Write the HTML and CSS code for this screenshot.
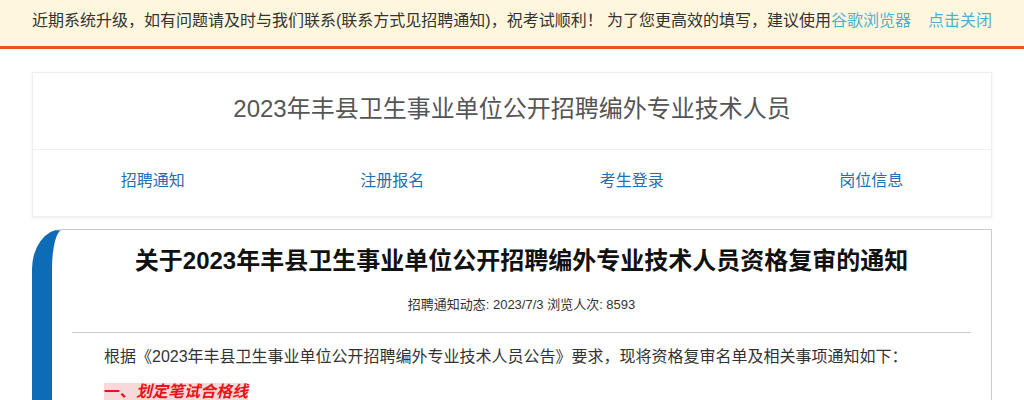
FILE: index.html
```html
<!DOCTYPE html>
<html lang="zh-CN">
<head>
<meta charset="utf-8">
<title>2023年丰县卫生事业单位公开招聘编外专业技术人员</title>
<link rel="stylesheet" href="styles.css">
</head>
<body>
<div class="notice-bar">
  <div class="wrap notice-inner">
    <span class="notice-text">近期系统升级，如有问题请及时与我们联系(联系方式见招聘通知)，祝考试顺利！ 为了您更高效的填写，建议使用<a class="notice-link" href="#">谷歌浏览器</a></span>
    <a class="notice-link" href="#">点击关闭</a>
  </div>
</div>

<div class="wrap header-card">
  <div class="site-title">2023年丰县卫生事业单位公开招聘编外专业技术人员</div>
  <nav class="nav">
    <a href="#">招聘通知</a>
    <a href="#">注册报名</a>
    <a href="#">考生登录</a>
    <a href="#">岗位信息</a>
  </nav>
</div>

<div class="wrap article">
  <h1 class="article-title">关于2023年丰县卫生事业单位公开招聘编外专业技术人员资格复审的通知</h1>
  <div class="article-meta">招聘通知动态: 2023/7/3 浏览人次: 8593</div>
  <div class="article-body">
    <p>根据《2023年丰县卫生事业单位公开招聘编外专业技术人员公告》要求，现将资格复审名单及相关事项通知如下：</p>
    <p><span class="hl">一、<em>划定笔试合格线</em></span></p>
  </div>
</div>
</body>
</html>
```

FILE: styles.css
```css
* { box-sizing: border-box; }
body {
  margin: 0;
  background: #fff;
  font-family: "Liberation Sans", Arial, "Noto Sans CJK SC", sans-serif;
  color: #333;
}
a { text-decoration: none; }
.wrap { width: 960px; margin: 0 auto; }

.notice-bar {
  background: #fff7dd;
  border-bottom: 3px solid #e55a1c;
  height: 49px;
}
.notice-inner {
  display: flex;
  justify-content: space-between;
  font-size: 16px;
  line-height: 41px;
  color: #333;
}
.notice-link { color: #4fb0cf; }

.header-card {
  margin-top: 23px;
  background: #fff;
  border: 1px solid #eee;
  box-shadow: 0 1px 3px rgba(0,0,0,0.08);
}
.site-title {
  height: 77px;
  line-height: 72px;
  text-align: center;
  font-size: 24px;
  color: #555;
  border-bottom: 1px solid #eee;
}
.nav {
  display: grid;
  grid-template-columns: repeat(4, 1fr);
  height: 66px;
}
.nav a {
  text-align: center;
  line-height: 62px;
  font-size: 16px;
  color: #1f6fb2;
}

.article {
  margin-top: 12px;
  border: 1px solid #ccc;
  border-left: 20px solid #0e6bb6;
  border-right: 1px solid #ccc;
  border-top-left-radius: 30px 40px;
  padding: 0 20px;
  min-height: 200px;
}
.article-title {
  margin: 0;
  padding-top: 15px;
  line-height: 32px;
  font-size: 24px;
  font-weight: bold;
  color: #111;
  text-align: center;
}
.article-meta {
  margin-top: 18px;
  line-height: 20px;
  font-size: 13px;
  color: #333;
  text-align: center;
  padding-bottom: 17px;
  border-bottom: 1px solid #ccc;
}
.article-body { padding-top: 6px; }
.article-body p {
  margin: 0;
  font-size: 16px;
  line-height: 35px;
  text-indent: 2em;
  color: #333;
}
.hl {
  background: #f7d9d9;
  color: #e8141b;
  font-weight: bold;
}
.hl em { font-style: italic; }
```
